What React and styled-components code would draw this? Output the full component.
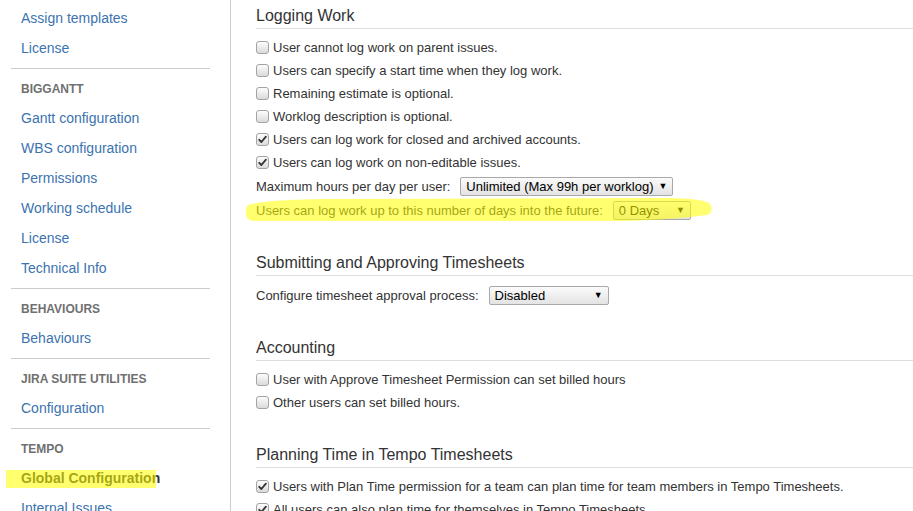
import React from "react";
import styled, { createGlobalStyle } from "styled-components";

const GlobalStyle = createGlobalStyle`
  html, body {
    margin: 0;
    padding: 0;
    background: #fff;
    overflow: hidden;
  }
  body {
    font-family: "Liberation Sans", Arial, sans-serif;
    color: #333;
  }
`;

const navGroups = [
  {
    items: ["Assign templates", "License"],
  },
  {
    title: "BigGantt",
    items: [
      "Gantt configuration",
      "WBS configuration",
      "Permissions",
      "Working schedule",
      "License",
      "Technical Info",
    ],
  },
  { title: "Behaviours", items: ["Behaviours"] },
  { title: "Jira Suite Utilities", items: ["Configuration"] },
  {
    title: "Tempo",
    items: ["Global Configuration", "Internal Issues"],
    active: "Global Configuration",
  },
];

// freehand marker stroke drawn over the "days into the future" row
const strokePath =
  "M4 8 C20 3 60 2 100 2 L420 1 C446 1 462 3 466 7 C469 11 468 16 463 18 C440 21 420 23 380 24 L10 24 C4 24 1 20 2 15 C2 12 2 10 4 8 Z";

function Check({ checked }) {
  return (
    <Box $checked={checked}>
      {checked && (
        <svg width="9" height="9" viewBox="0 0 9 9">
          <path
            d="M1.2 4.8 L3.4 7 L7.9 1.6"
            fill="none"
            stroke="#333"
            strokeWidth="1.8"
            strokeLinecap="round"
            strokeLinejoin="round"
          />
        </svg>
      )}
    </Box>
  );
}

function Select({ value, width }) {
  return (
    <SelectBox $width={width}>
      <span>{value}</span>
      <Arrow>▼</Arrow>
    </SelectBox>
  );
}

function CheckRow({ checked, children }) {
  return (
    <Row>
      <Check checked={checked} />
      <span>{children}</span>
    </Row>
  );
}

export default function App() {
  return (
    <>
      <GlobalStyle />
      <Page>
        <Sidebar>
          {navGroups.map((group, gi) => (
            <React.Fragment key={gi}>
              {gi > 0 && <Divider />}
              {group.title && <NavHeading>{group.title}</NavHeading>}
              {group.items.map((item) => (
                <NavItem key={item} $active={group.active === item}>
                  {group.active === item && <Marker />}
                  {item}
                </NavItem>
              ))}
            </React.Fragment>
          ))}
        </Sidebar>
        <Main>
          <Section>
            <Heading>Logging Work</Heading>
            <CheckRow>User cannot log work on parent issues.</CheckRow>
            <CheckRow>Users can specify a start time when they log work.</CheckRow>
            <CheckRow>Remaining estimate is optional.</CheckRow>
            <CheckRow>Worklog description is optional.</CheckRow>
            <CheckRow checked>Users can log work for closed and archived accounts.</CheckRow>
            <CheckRow checked>Users can log work on non-editable issues.</CheckRow>
            <FieldRow>
              <span>Maximum hours per day per user:</span>
              <Select value="Unlimited (Max 99h per worklog)" width={213} />
            </FieldRow>
            <FieldRow>
              <span>Users can log work up to this number of days into the future:</span>
              <Select value="0 Days" width={78} />
              <Stroke width="472" height="28" viewBox="0 0 472 28">
                <path d={strokePath} fill="#ffff00" fillOpacity="0.56" />
              </Stroke>
            </FieldRow>
          </Section>
          <Section>
            <Heading>Submitting and Approving Timesheets</Heading>
            <FieldRow>
              <span>Configure timesheet approval process:</span>
              <Select value="Disabled" width={120} />
            </FieldRow>
          </Section>
          <Section>
            <Heading>Accounting</Heading>
            <CheckRow>User with Approve Timesheet Permission can set billed hours</CheckRow>
            <CheckRow>Other users can set billed hours.</CheckRow>
          </Section>
          <Section>
            <Heading>Planning Time in Tempo Timesheets</Heading>
            <CheckRow checked>
              Users with Plan Time permission for a team can plan time for team members in Tempo Timesheets.
            </CheckRow>
            <CheckRow checked>All users can also plan time for themselves in Tempo Timesheets.</CheckRow>
          </Section>
        </Main>
      </Page>
    </>
  );
}

const Page = styled.div`
  display: flex;
  height: 511px;
  overflow: hidden;
`;

const Sidebar = styled.nav`
  width: 231px;
  flex-shrink: 0;
  box-sizing: border-box;
  padding: 3px 20px 0 11px;
  border-right: 1px solid #ccc;
`;

const NavItem = styled.div`
  position: relative;
  height: 30px;
  line-height: 30px;
  padding-left: 10px;
  font-size: 14px;
  white-space: nowrap;
  color: ${(p) => (p.$active ? "#333" : "#3b73af")};
  font-weight: ${(p) => (p.$active ? "bold" : "normal")};
`;

const Marker = styled.span`
  position: absolute;
  left: -5px;
  top: 7px;
  width: 150px;
  height: 18px;
  background: rgba(255, 255, 0, 0.56);
  pointer-events: none;
`;

const NavHeading = styled.div`
  height: 30px;
  line-height: 32px;
  padding-left: 10px;
  font-size: 12px;
  font-weight: bold;
  text-transform: uppercase;
  color: #707070;
`;

const Divider = styled.div`
  height: 1px;
  background: #ccc;
  margin: 5px 0 4px;
`;

const Main = styled.main`
  flex: 1;
  min-width: 0;
  padding: 5px 0 0 25px;
`;

const Section = styled.section`
  & + & {
    margin-top: 30px;
  }
`;

const Heading = styled.h2`
  margin: 0 0 7px;
  padding: 1px 0 2px;
  font-size: 16px;
  line-height: 20px;
  font-weight: normal;
  color: #333;
  border-bottom: 1px solid #ddd;
  white-space: nowrap;
`;

const Row = styled.div`
  display: flex;
  align-items: center;
  gap: 4px;
  height: 23px;
  font-size: 13px;
  white-space: nowrap;
`;

const Box = styled.span`
  width: 13px;
  height: 13px;
  box-sizing: border-box;
  border: 1px solid #a3a3a3;
  border-radius: 3px;
  background: linear-gradient(#fdfdfd, #dadada);
  display: flex;
  align-items: center;
  justify-content: center;
  flex-shrink: 0;
`;

const FieldRow = styled.div`
  position: relative;
  display: flex;
  align-items: center;
  gap: 10px;
  height: 24px;
  font-size: 13px;
  white-space: nowrap;
`;

const Stroke = styled.svg`
  position: absolute;
  left: -12px;
  top: -1px;
  pointer-events: none;
`;

const SelectBox = styled.div`
  width: ${(p) => p.$width}px;
  height: 19px;
  box-sizing: border-box;
  display: flex;
  align-items: center;
  justify-content: space-between;
  padding: 0 5px 0 5px;
  border: 1px solid #a9a9a9;
  border-radius: 2px;
  background: linear-gradient(#fbfbfb, #e3e3e3);
  color: #000;
  font-size: 13px;
`;

const Arrow = styled.span`
  font-size: 9px;
  line-height: 1;
  color: #000;
`;
